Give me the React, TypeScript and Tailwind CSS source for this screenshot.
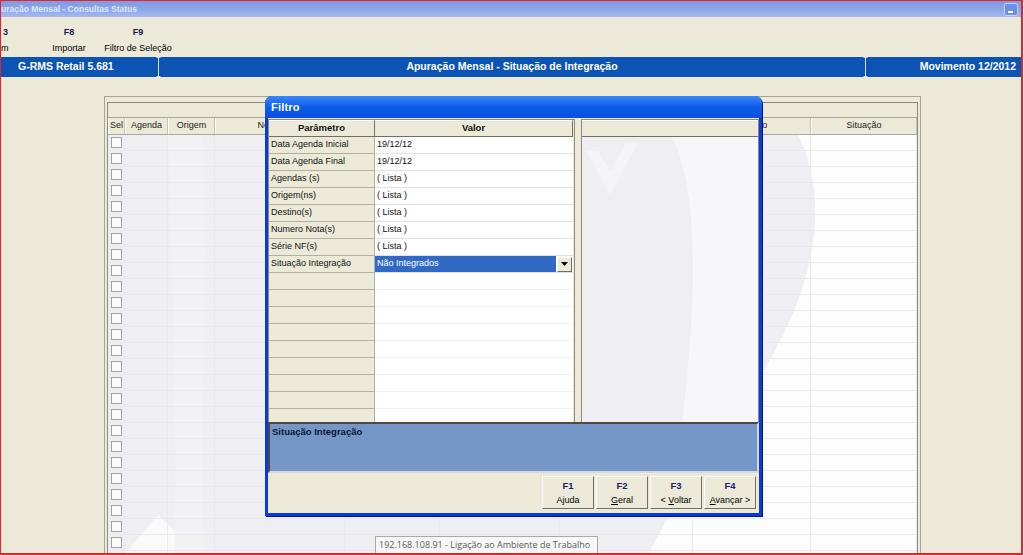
import React from "react";

const gridCols = [
  { t: "Sel", w: "w-[17px]" },
  { t: "Agenda", w: "w-[43px]" },
  { t: "Origem", w: "w-[47px]" },
  { t: "Nota Fiscal", w: "w-[130px]" },
  { t: "Série", w: "w-[95px]" },
  { t: "Emissão", w: "w-[120px]" },
  { t: "Valor", w: "w-[133px]" },
  { t: "Destino", w: "w-[118px]" },
  { t: "Situação", w: "flex-1" },
];

const params: [string, string][] = [
  ["Data Agenda Inicial", "19/12/12"],
  ["Data Agenda Final", "19/12/12"],
  ["Agendas (s)", "( Lista )"],
  ["Origem(ns)", "( Lista )"],
  ["Destino(s)", "( Lista )"],
  ["Numero Nota(s)", "( Lista )"],
  ["Série NF(s)", "( Lista )"],
  ["Situação Integração", "Não Integrados"],
];

function Sep() {
  return (
    <svg width="7" height="20" viewBox="0 0 7 20" className="shrink-0">
      <path d="M1.5 0.5h4M3.5 0.5v19M1.5 19.5h4" stroke="#d6e2f3" strokeWidth="1" fill="none" />
    </svg>
  );
}

function ToolItem({ k, label, w }: { k: string; label: string; w: string }) {
  return (
    <div className={`${w} flex flex-col items-center`}>
      <span className="font-bold text-[9px] leading-[12px] text-[#1a1a50]">{k}</span>
      <span className="mt-[4px] text-[9px] leading-[12px] text-black whitespace-nowrap">{label}</span>
    </div>
  );
}

function FButton({ k, children }: { k: string; children: React.ReactNode }) {
  return (
    <div className="w-[52px] h-[33px] bg-[#ECE9D8] border border-t-white border-l-white border-r-[#716f64] border-b-[#716f64] flex flex-col items-center justify-center">
      <span className="font-bold text-[9.5px] leading-[12px] text-[#1c1c6c]">{k}</span>
      <span className="mt-[3px] text-[9px] leading-[11px] text-black whitespace-nowrap">{children}</span>
    </div>
  );
}

function FilterDialog() {
  const empty = Array.from({ length: 10 });
  return (
    <div className="absolute left-[264px] top-[95px] w-[497px] h-[420px] flex flex-col rounded-t-[7px] bg-[#0a3bd2] px-[3px] pb-[3px] shadow-[1px_1px_0_#00138c]">
      <div className="h-[22px] -mx-[3px] rounded-t-[7px] bg-gradient-to-b from-[#3a88f8] via-[#0b5ce9] to-[#0a4ede] flex items-center pl-[6px]">
        <span className="text-white font-bold text-[11px] tracking-[0.2px]">Filtro</span>
      </div>
      <div className="flex-1 bg-[#ECE9D8] flex flex-col">
        <div className="flex gap-[6px] pt-[1px] h-[305px]">
          <div className="w-[307px] h-[304px] border border-[#8d8b80] bg-[#ECE9D8] overflow-hidden flex flex-col">
            <div className="flex h-[17px] shrink-0">
              <div className="w-[106px] border-r border-b border-r-[#716f64] border-b-[#716f64] border-t border-t-white flex items-center justify-center font-bold text-[9.5px] text-[#111]">
                Parâmetro
              </div>
              <div className="w-[198px] border-r border-b border-r-[#716f64] border-b-[#716f64] border-t border-t-white flex items-center justify-center font-bold text-[9.5px] text-[#111]">
                Valor
              </div>
            </div>
            {params.map(([p, v], i) => {
              const sel = i === params.length - 1;
              return (
                <div key={p} className="flex h-[17px] shrink-0">
                  <div className="w-[106px] border-b border-r border-[#b3af9f] flex items-center pl-[2px] text-[9px] text-[#111] whitespace-nowrap">
                    {p}
                  </div>
                  {sel ? (
                    <div className="w-[198px] border-b border-[#e2e2e2] bg-white flex items-center">
                      <div className="flex-1 h-[16px] bg-[#316ac5] flex items-center pl-[2px] text-[9px] text-white">
                        {v}
                      </div>
                      <div className="w-[15px] h-[15px] mx-[1px] bg-[#ECE9D8] border border-t-white border-l-white border-r-[#716f64] border-b-[#716f64] flex items-center justify-center">
                        <svg width="7" height="4" viewBox="0 0 7 4">
                          <path d="M0 0h7L3.5 4z" fill="#000" />
                        </svg>
                      </div>
                    </div>
                  ) : (
                    <div className="w-[198px] border-b border-[#e2e2e2] bg-white flex items-center pl-[2px] text-[9px] text-[#111]">
                      {v}
                    </div>
                  )}
                </div>
              );
            })}
            {empty.map((_, i) => (
              <div key={i} className="flex h-[17px] shrink-0">
                <div className="w-[106px] border-b border-r border-[#b3af9f]" />
                <div className="w-[198px] border-b border-[#f0f0f0] bg-white" />
              </div>
            ))}
          </div>
          <div className="w-[178px] h-[304px] border border-[#8d8b80] flex flex-col overflow-hidden">
            <div className="h-[17px] shrink-0 bg-[#ECE9D8] border-b border-[#716f64] border-t border-t-white" />
            <div className="flex-1 relative bg-[#f7f6f8]">
              <svg className="absolute inset-0" width="176" height="286" viewBox="0 0 176 286">
                <path d="M0 0H90C110 40 120 120 100 286H0Z" fill="#efeef2" />
                <path d="M4 14L28 58L56 6H44L28 34L16 14Z" fill="#f5f4f7" />
              </svg>
            </div>
          </div>
        </div>
        <div className="h-[51px] mt-[-1px] bg-[#7497c8] border-2 border-t-[#4a4a4a] border-l-[#4a4a4a] border-r-[#d8d8d8] border-b-[#d8d8d8] px-[2px] pt-[2px] text-[9.5px] leading-[12px]">
          <span className="font-bold text-[#071633]">Situação Integração</span>
        </div>
        <div className="flex-1 flex justify-end items-start gap-[2px] pt-[3px] pr-[3px]">
          <FButton k="F1">Ajuda</FButton>
          <FButton k="F2">
            <span className="underline">G</span>eral
          </FButton>
          <FButton k="F3">
            {"< "}
            <span className="underline">V</span>oltar
          </FButton>
          <FButton k="F4">
            <span className="underline">A</span>vançar {">"}
          </FButton>
        </div>
      </div>
    </div>
  );
}

function DataGrid() {
  const rows = Array.from({ length: 27 });
  return (
    <div className="w-[817px] flex-1 border border-b-0 border-[#a8a597] px-[2px] pt-[5px] flex flex-col">
      <div className="flex-1 border border-b-0 border-[#8d8b80] flex flex-col overflow-hidden">
        <div className="h-[15px] shrink-0 border-b border-[#aca899] bg-[#ECE9D8]" />
        <div className="flex h-[17px] shrink-0 bg-[#ECE9D8] border-b border-[#aca899]">
          {gridCols.map((c) => (
            <div
              key={c.t}
              className={`${c.w} shrink-0 border-r border-[#c7c3b3] border-l border-l-white flex items-center justify-center text-[9px] text-[#222] whitespace-nowrap overflow-hidden`}
            >
              {c.t}
            </div>
          ))}
        </div>
        <div className="flex-1 relative bg-[#fdfdfd] overflow-hidden">
          <svg className="absolute inset-0" width="811" height="420" viewBox="0 0 811 420">
            <path d="M0 0H690C720 60 715 150 640 260C590 330 560 380 540 420H0Z" fill="#efeef2" />
            <path d="M16 420L50 380L92 420Z" fill="#fafafb" />
            <path d="M60 0H95C100 150 92 300 96 420H66C70 300 64 150 60 0Z" fill="#f2f1f4" />
          </svg>
          <div className="relative flex flex-col">
            {rows.map((_, i) => (
              <div key={i} className="flex h-[16px] shrink-0">
                {gridCols.map((c) => (
                  <div
                    key={c.t}
                    className={`${c.w} shrink-0 border-r border-b border-[#e9e8ec] flex items-center justify-center`}
                  >
                    {c.t === "Sel" && <div className="w-[11px] h-[11px] border border-[#a3a3a3] bg-white/70" />}
                  </div>
                ))}
              </div>
            ))}
          </div>
        </div>
      </div>
    </div>
  );
}

export default function App() {
  return (
    <div className="w-[1024px] h-[555px] overflow-hidden bg-white font-['Liberation_Sans',Arial,sans-serif]">
      <div className="relative w-[1023px] h-[555px] border border-r-2 border-b-2 border-[#e0262b] bg-[#ECE9D8] flex flex-col overflow-hidden">
        <div className="h-[16px] shrink-0 bg-gradient-to-b from-[#7e9be2] via-[#8ca7e8] to-[#a3b8ef] flex items-center justify-between">
          <span className="font-bold text-[8.5px] text-[#dfe6f8] whitespace-nowrap">uração Mensal - Consultas Status</span>
          <div className="w-[14px] h-[13px] mr-[3px] rounded-[2px] bg-[#6d8fe6] border border-[#c6d3f5] flex items-end pl-[3px] pb-[2px]">
            <div className="w-[5px] h-[2px] bg-white" />
          </div>
        </div>
        <div className="h-[40px] shrink-0 flex pt-[9px]">
          <div className="w-[8px] flex flex-col items-start">
            <span className="ml-[2px] font-bold text-[9px] leading-[12px] text-[#1a1a50]">3</span>
            <span className="mt-[4px] text-[9px] leading-[12px]">m</span>
          </div>
          <div className="ml-[35px]">
            <ToolItem k="F8" label="Importar" w="w-[50px]" />
          </div>
          <div className="ml-[6px]">
            <ToolItem k="F9" label="Filtro de Seleção" w="w-[76px]" />
          </div>
        </div>
        <div className="h-[20px] shrink-0 bg-[#0b54b4] flex items-center text-white font-bold text-[10.5px]">
          <div className="w-[154px] pl-[17px] whitespace-nowrap">G-RMS Retail 5.681</div>
          <Sep />
          <div className="flex-1 text-center whitespace-nowrap">Apuração Mensal - Situação de Integração</div>
          <Sep />
          <div className="w-[152px] text-right pr-[5px] whitespace-nowrap">Movimento 12/2012</div>
        </div>
        <div className="flex-1 flex flex-col pt-[19px] pl-[103px] overflow-hidden">
          <DataGrid />
        </div>
        <FilterDialog />
        <div className="absolute left-[374px] top-[535px] w-[223px] h-[17px] bg-[#f7f7f7] border border-b-0 border-[#a9a9a9] flex items-center pl-[3px]">
          <span className="text-[9px] text-[#5a5a5a] whitespace-nowrap font-['Open_Sans',sans-serif]">
            192.168.108.91 - Ligação ao Ambiente de Trabalho
          </span>
        </div>
      </div>
    </div>
  );
}
